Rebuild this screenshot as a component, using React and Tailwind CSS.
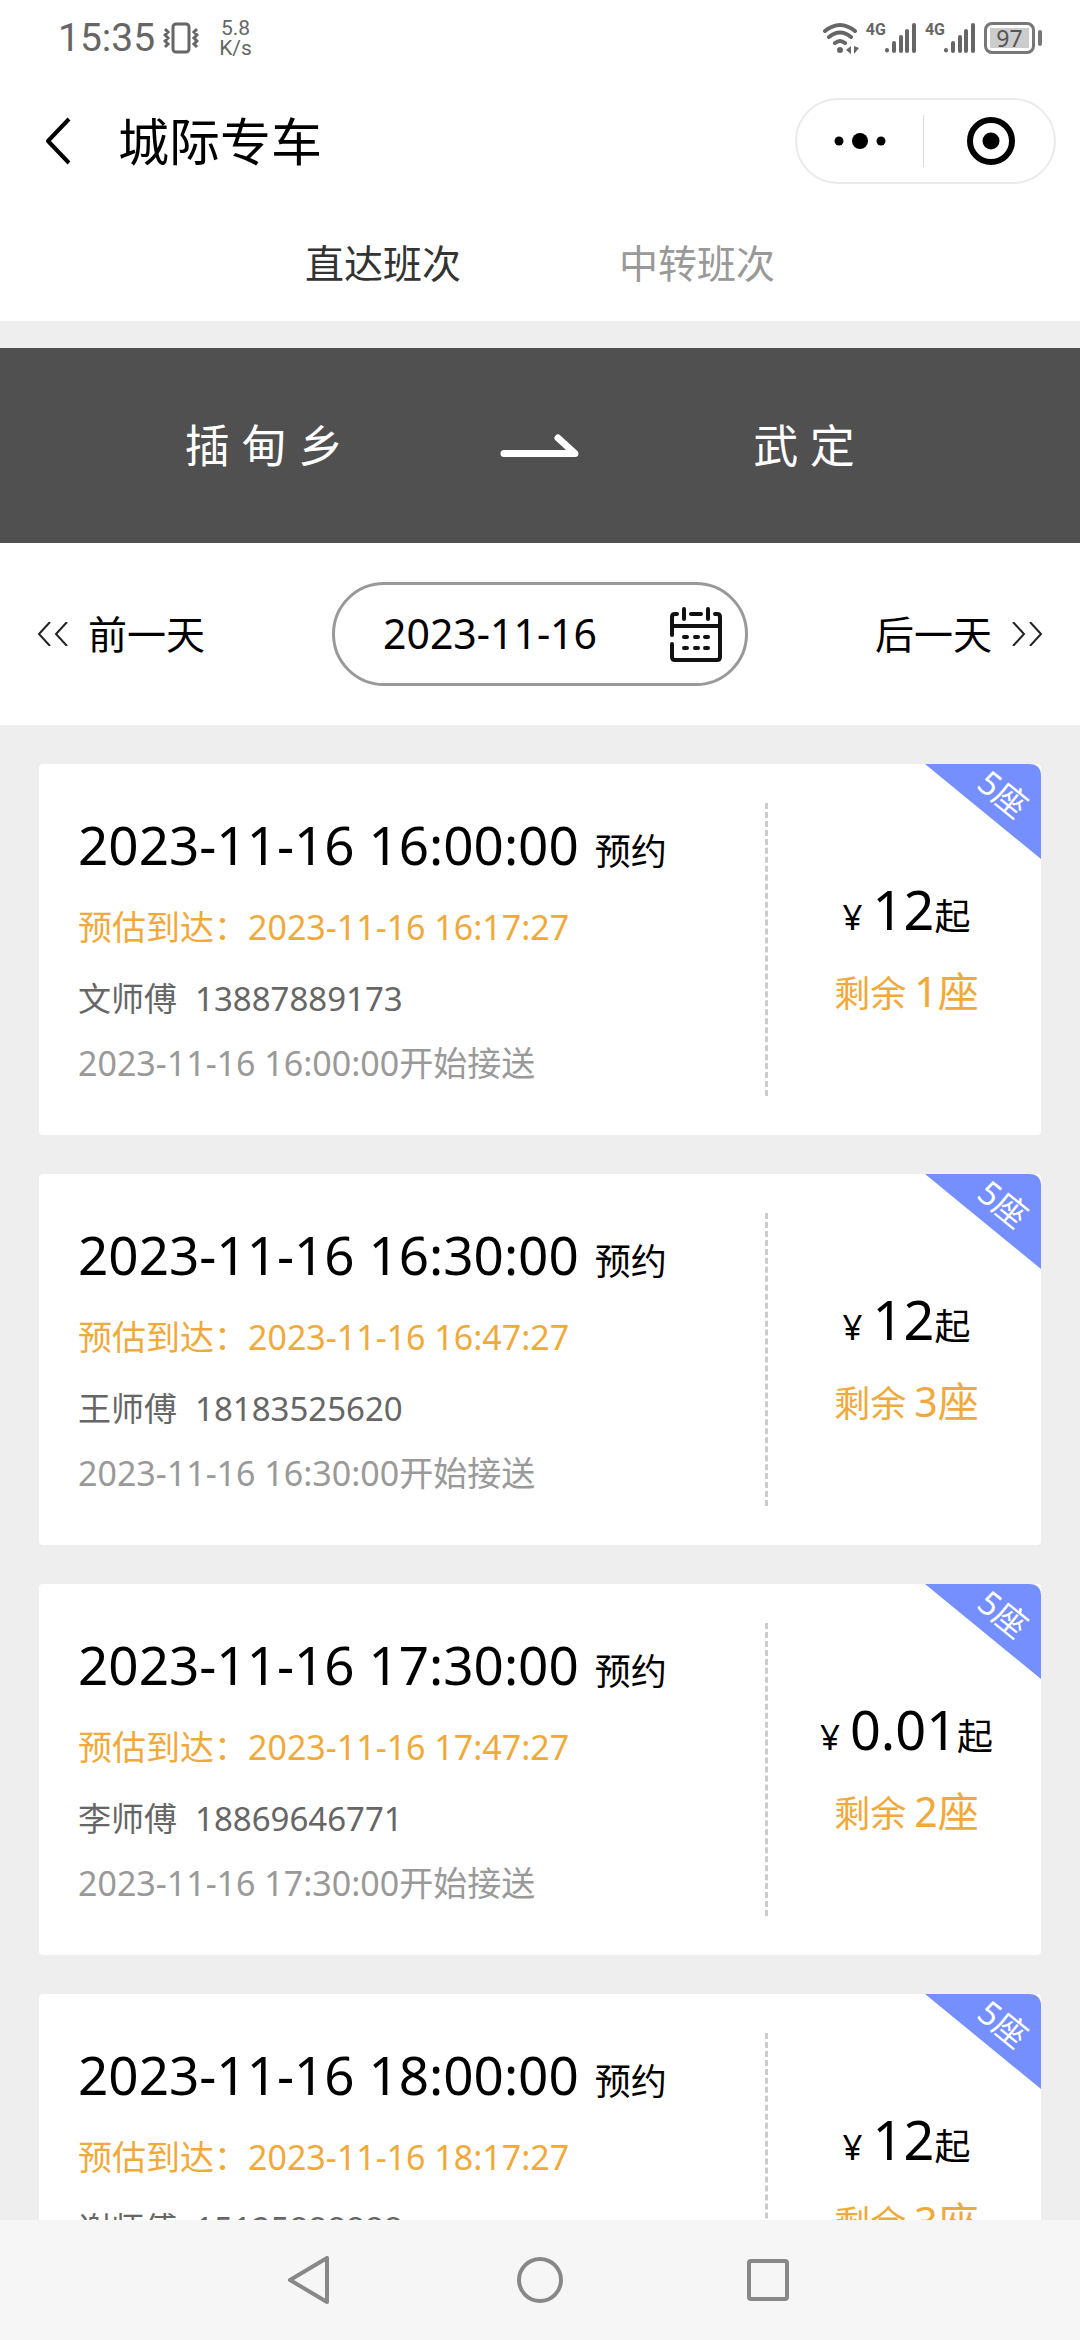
const trips = [
  { id: 1, departure: '2023-11-16 16:00:00', arrival: '2023-11-16 16:17:27', driver: '文师傅', phone: '13887889173', price: '12', left: 1 },
  { id: 2, departure: '2023-11-16 16:30:00', arrival: '2023-11-16 16:47:27', driver: '王师傅', phone: '18183525620', price: '12', left: 3 },
  { id: 3, departure: '2023-11-16 17:30:00', arrival: '2023-11-16 17:47:27', driver: '李师傅', phone: '18869646771', price: '0.01', left: 2 },
  { id: 4, departure: '2023-11-16 18:00:00', arrival: '2023-11-16 18:17:27', driver: '谢师傅', phone: '15125888888', price: '12', left: 3 },
];

function Signal() {
  return (
    <div className="flex">
      <span className="-mr-1 font-['Roboto'] text-base leading-4 font-bold">4G</span>
      <svg className="h-8 w-9" viewBox="0 0 36 32" stroke="currentColor" strokeWidth="4" strokeLinecap="round">
        <path d="M5 28v.5M12 21v8M19 15v14M25 9v20M32 3v26" />
      </svg>
    </div>
  );
}

function StatusBar() {
  return (
    <div className="flex h-[76px] items-center justify-between pr-[38px] pl-[58px] text-[#666]">
      <div className="flex items-center">
        <span className="font-['Roboto'] text-[39px] leading-10">15:35</span>
        <svg className="ml-2 h-8 w-9" viewBox="0 0 36 32" fill="none" stroke="currentColor" strokeWidth="3">
          <rect x="10" y="2" width="16" height="28" rx="3" />
          <path d="M2 7l3 3-3 3 3 3-3 3 3 3-3 3M34 7l-3 3 3 3-3 3 3 3-3 3 3 3" />
        </svg>
        <div className="ml-5 text-center font-['Roboto'] text-[21px] leading-5">
          <div>5.8</div>
          <div>K/s</div>
        </div>
      </div>
      <div className="flex items-center gap-[7px]">
        <svg className="h-8 w-9" viewBox="0 0 36 32" fill="none" stroke="currentColor" strokeWidth="4" strokeLinecap="round">
          <path d="M2 9q15-12 30 0M6 15q11-9 22 0M12 21q5-4 10 0" />
          <circle cx="17" cy="28" r="3" fill="currentColor" stroke="none" />
          <path d="M28 24v8l-5-4zM31 24v8l5-6z" fill="currentColor" stroke="none" />
        </svg>
        <Signal />
        <Signal />
        <div className="flex items-center gap-[3px]">
          <div className="flex h-8 w-[51px] items-center rounded-lg border-3 border-[#777] p-[3px]">
            <span className="flex h-full flex-1 items-center justify-center bg-[#ccc] text-[23px] text-[#555]">97</span>
          </div>
          <div className="h-4 w-1 rounded-full bg-[#777]" />
        </div>
      </div>
    </div>
  );
}

function Header() {
  return (
    <header className="flex h-[130px] items-center justify-between pr-6 pl-[42px]">
      <div className="flex items-center gap-11">
        <button aria-label="返回">
          <svg className="h-12 w-8" viewBox="0 0 32 48" fill="none" stroke="#000" strokeWidth="4" strokeLinejoin="round">
            <path d="M27 2L6 24l21 22" />
          </svg>
        </button>
        <h1 className="text-[51px] leading-none">城际专车</h1>
      </div>
      <div className="flex h-[86px] w-[261px] items-center rounded-full border-2 border-[#ebebeb]">
        <button className="flex flex-1 justify-center" aria-label="更多">
          <svg className="h-5 w-14" viewBox="0 0 56 20">
            <circle cx="7" cy="10" r="4.5" />
            <circle cx="28" cy="10" r="8" />
            <circle cx="49" cy="10" r="4.5" />
          </svg>
        </button>
        <div className="h-[52px] w-px bg-[#ddd]" />
        <button className="flex flex-1 justify-center pl-1" aria-label="关闭">
          <svg className="size-12" viewBox="0 0 48 48">
            <circle cx="24" cy="24" r="21" fill="none" stroke="#000" strokeWidth="6" />
            <circle cx="24" cy="24" r="8.5" />
          </svg>
        </button>
      </div>
    </header>
  );
}

function Ribbon() {
  return (
    <div className="absolute top-0 right-0 h-[95px] w-[116px]">
      <svg className="h-full w-full" viewBox="0 0 116 95">
        <path d="M0 0h104q12 0 12 12v83z" fill="#758fff" />
      </svg>
      <span className="absolute top-2.5 right-3 rotate-[39deg] text-[33px] leading-10 text-white">5座</span>
    </div>
  );
}

function TripCard({ trip }) {
  return (
    <li className="relative flex rounded-sm bg-white py-[39px]">
      <div className="flex-1 pl-[39px]">
        <p className="flex items-baseline gap-4 leading-[84px]">
          <span className="text-[53px]">{trip.departure}</span>
          <span className="text-[36px] leading-none">预约</span>
        </p>
        <p className="text-[34px] leading-[80px] text-[#f0a93b]">预估到达：{trip.arrival}</p>
        <p className="flex gap-[18px] text-[33px] leading-[64px] text-[#666]">
          <span>{trip.driver}</span>
          <span>{trip.phone}</span>
        </p>
        <p className="text-[34px] leading-[65px] text-[#999]">{trip.departure}开始接送</p>
      </div>
      <div className="flex w-[276px] flex-col items-center justify-center border-l-3 border-dashed border-[#ccc] pl-1">
        <p className="flex items-baseline leading-[82px]">
          <span className="mr-2.5 text-[35px] leading-none">¥</span>
          <span className="text-[54px]">{trip.price}</span>
          <span className="text-[36px] leading-none">起</span>
        </p>
        <p className="flex items-baseline gap-2 leading-[82px] text-[#f0a93b]">
          <span className="text-[36px] leading-none">剩余</span>
          <span className="text-[41px]">{trip.left}座</span>
        </p>
      </div>
      <Ribbon />
    </li>
  );
}

function DateBar() {
  return (
    <div className="flex h-[182px] items-center justify-between px-9">
      <button className="flex items-center gap-5 text-[39px]">
        <svg className="h-6 w-8" viewBox="0 0 32 24" fill="none" stroke="#222" strokeWidth="2">
          <path d="M14 0L3 12l11 12M31 0L20 12l11 12" />
        </svg>
        前一天
      </button>
      <button className="flex h-[104px] w-[416px] items-center justify-between rounded-full border-3 border-[#999] pr-[22px] pl-12 text-[41px]">
        2023-11-16
        <svg className="h-14 w-[54px]" viewBox="0 0 54 56" fill="none" stroke="#111" strokeWidth="4" strokeLinecap="round">
          <path d="M8 8H6q-3 0-3 3v18M3 38v13q0 3 3 3h42q3 0 3-3V11q0-3-3-3h-2M22 8h10M3 20h48M15 3v10M39 3v10" />
          <path d="M15 31h3M26 31h3M36 31h3M15 42h3M26 42h3M36 42h3" />
        </svg>
      </button>
      <button className="flex items-center gap-5 text-[39px]">
        后一天
        <svg className="h-6 w-8" viewBox="0 0 32 24" fill="none" stroke="#222" strokeWidth="2">
          <path d="M1 0l11 12L1 24M18 0l11 12-11 12" />
        </svg>
      </button>
    </div>
  );
}

function NavBar() {
  return (
    <nav className="flex h-[120px] shrink-0 items-center justify-center gap-[180px] bg-[#f6f6f6] text-[#888]">
      <button aria-label="后退">
        <svg className="size-12" viewBox="0 0 48 48" fill="none" stroke="currentColor" strokeWidth="4" strokeLinejoin="round">
          <path d="M39 2v44L2 24z" />
        </svg>
      </button>
      <button aria-label="主页">
        <svg className="size-12" viewBox="0 0 48 48" fill="none" stroke="currentColor" strokeWidth="4">
          <circle cx="24" cy="24" r="21" />
        </svg>
      </button>
      <button aria-label="最近任务">
        <svg className="size-12" viewBox="0 0 48 48" fill="none" stroke="currentColor" strokeWidth="4">
          <rect x="5" y="5" width="38" height="38" rx="2" />
        </svg>
      </button>
    </nav>
  );
}

function App() {
  return (
    <div className="flex h-screen flex-col overflow-hidden bg-white font-['Noto_Sans','Noto_Sans_CJK_SC',sans-serif] text-black">
      <div className="shrink-0">
        <StatusBar />
        <Header />
        <div className="flex h-[115px] items-center justify-center gap-[158px] text-[39px]">
          <button className="text-[#333]">直达班次</button>
          <button className="text-[#999]">中转班次</button>
        </div>
        <div className="h-[27px] bg-[#eee]" />
        <div className="flex h-[195px] items-center bg-[#505050] text-center text-[45px] text-white">
          <span className="flex-1 pr-3">插 甸 乡</span>
          <svg className="-mx-10 h-6 w-20 shrink-0" viewBox="0 0 80 24" fill="none" stroke="currentColor" strokeWidth="7" strokeLinecap="round" strokeLinejoin="round">
            <path d="M4 19.5h71L58 4" />
          </svg>
          <span className="flex-1 pr-3">武 定</span>
        </div>
        <DateBar />
      </div>
      <ul className="flex min-h-0 flex-1 flex-col gap-[39px] overflow-hidden bg-[#eee] p-[39px]">
        {trips.map((trip) => (
          <TripCard key={trip.id} trip={trip} />
        ))}
      </ul>
      <NavBar />
    </div>
  );
}

export default App;
